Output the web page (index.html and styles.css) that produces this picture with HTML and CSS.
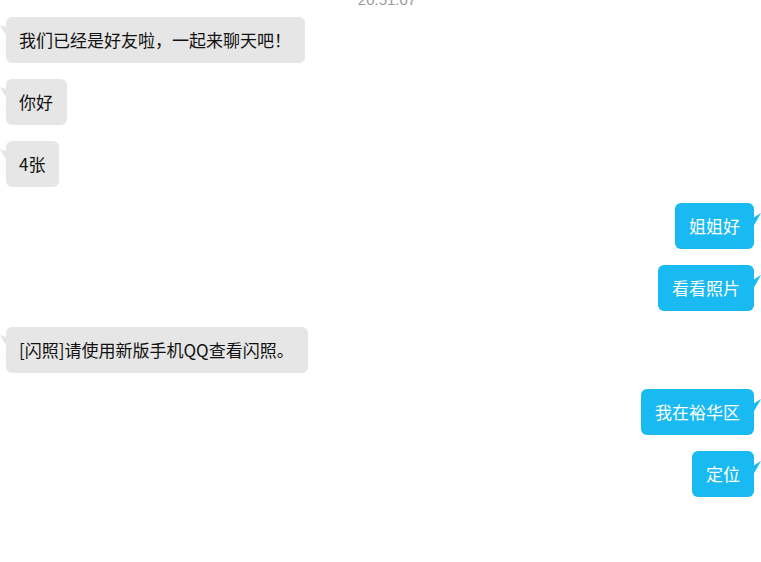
FILE: index.html
```html
<!DOCTYPE html>
<html lang="zh-CN">
<head>
<meta charset="utf-8">
<title>聊天</title>
<link rel="stylesheet" href="styles.css">
</head>
<body>
<div class="chat">
  <div class="time">20:51:07</div>
  <div class="row left"><div class="bubble">我们已经是好友啦，一起来聊天吧！</div></div>
  <div class="row left"><div class="bubble">你好</div></div>
  <div class="row left"><div class="bubble">4张</div></div>
  <div class="row right"><div class="bubble">姐姐好</div></div>
  <div class="row right"><div class="bubble">看看照片</div></div>
  <div class="row left"><div class="bubble">[闪照]请使用新版手机QQ查看闪照。</div></div>
  <div class="row right"><div class="bubble">我在裕华区</div></div>
  <div class="row right"><div class="bubble">定位</div></div>
</div>
</body>
</html>
```
FILE: styles.css
```css
html, body {
  margin: 0;
  padding: 0;
  background: #ffffff;
}
body {
  width: 761px;
  height: 562px;
  overflow: hidden;
  font-family: "Noto Sans CJK SC", "Noto Sans", sans-serif;
}
.chat {
  display: flex;
  flex-direction: column;
  gap: 16px;
  padding: 0 7px 0 6px;
}
.time {
  height: 17px;
  margin-top: 0;
  margin-bottom: -16px;
  padding-left: 14px;
  text-align: center;
  font-family: "Liberation Sans", Arial, sans-serif;
  font-size: 15px;
  line-height: 15px;
  color: #9a9a9a;
  transform: translateY(-8px);
}
.row {
  display: flex;
}
.row.right {
  justify-content: flex-end;
}
.bubble {
  position: relative;
  height: 46px;
  box-sizing: border-box;
  padding: 0 14px 0 13px;
  border-radius: 6px;
  font-size: 17px;
  line-height: 46px;
  white-space: nowrap;
}
.left .bubble {
  background: #e6e6e6;
  color: #111111;
}
.right .bubble {
  background: #19b9f2;
  color: #ffffff;
  padding: 0 14px 0 14px;
}
.bubble::before {
  content: "";
  position: absolute;
  top: 8px;
  width: 8px;
  height: 14px;
}
.left .bubble::before {
  left: -6px;
  background: #e6e6e6;
  clip-path: polygon(0 0, 100% 20%, 100% 100%);
}
.right .bubble::before {
  right: -7px;
  top: 10px;
  background: #19b9f2;
  clip-path: polygon(100% 0, 0 35%, 0 100%);
}
```
